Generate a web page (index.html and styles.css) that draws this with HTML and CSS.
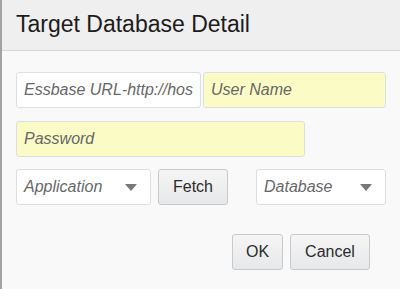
FILE: index.html
```html
<!DOCTYPE html>
<html>
<head>
<meta charset="utf-8">
<link rel="stylesheet" href="styles.css">
</head>
<body>
<div class="dialog">
  <div class="header">Target Database Detail</div>
  <div class="content">
    <div class="row first">
      <input class="field url" placeholder="Essbase URL-http://host:port/essbase">
      <input class="field user autofill" placeholder="User Name">
    </div>
    <div class="row">
      <input class="field password autofill" type="password" placeholder="Password">
    </div>
    <div class="row">
      <div class="select app">
        <span class="ph">Application</span>
        <svg class="arrow" width="12" height="7" viewBox="0 0 12 7"><path d="M0 0H12L6 7Z" fill="#777"/></svg>
      </div>
      <button class="btn fetch">Fetch</button>
      <div class="select db">
        <span class="ph">Database</span>
        <svg class="arrow" width="12" height="7" viewBox="0 0 12 7"><path d="M0 0H12L6 7Z" fill="#777"/></svg>
      </div>
    </div>
    <div class="actions">
      <button class="btn ok">OK</button>
      <button class="btn cancel">Cancel</button>
    </div>
  </div>
</div>
</body>
</html>
```
FILE: styles.css
```css
html, body {
  margin: 0;
  padding: 0;
  height: 100%;
}
body {
  background: #f9f9f9;
  font-family: "Liberation Sans", Arial, sans-serif;
  overflow: hidden;
}
.dialog {
  height: 289px;
  border-left: 2px solid #a3a3a3;
  box-sizing: border-box;
  background: #f9f9f9;
}
.header {
  background: #efefef;
  border-bottom: 1px solid #d3d7db;
  height: 28px;
  padding: 10px 0 12px 14px;
  font-size: 23px;
  line-height: 28px;
  color: #1c1c1c;
}
.content {
  padding: 21px 0 0 14px;
  display: flex;
  flex-direction: column;
  gap: 12px;
}
.row {
  display: flex;
  align-items: center;
}
.row.first {
  margin-bottom: 1px;
}
.field {
  box-sizing: border-box;
  height: 36px;
  border: 1px solid #dcdfe2;
  border-radius: 3px;
  background: #fff;
  padding: 0 7px;
  font-family: "Liberation Sans", Arial, sans-serif;
  font-size: 16px;
  font-style: italic;
  color: #333;
  outline: none;
  margin: 0;
}
.field::placeholder {
  color: #676767;
  font-style: italic;
}
.autofill {
  background: #fbfbc6;
}
.url { width: 185px; margin-right: 2px; }
.user { width: 183px; }
.password { width: 289px; }
.select {
  box-sizing: border-box;
  height: 36px;
  border: 1px solid #dcdfe2;
  border-radius: 3px;
  background: #fff;
  display: flex;
  align-items: center;
  justify-content: space-between;
  padding: 0 13px 0 7px;
  font-size: 16px;
  font-style: italic;
  color: #676767;
}
.arrow { display: block; margin-top: 1px; }
.app { width: 135px; margin-right: 7px; }
.db { width: 130px; margin-left: 28px; }
.btn {
  box-sizing: border-box;
  height: 36px;
  border: 1px solid #c6cacd;
  border-radius: 3px;
  background: linear-gradient(#f5f5f5, #e7e8ea);
  font-family: "Liberation Sans", Arial, sans-serif;
  font-size: 16px;
  color: #2b2b2b;
  padding: 0;
  margin: 0;
}
.fetch { width: 70px; }
.actions {
  display: flex;
  gap: 7px;
  margin-top: 17px;
  padding-left: 216px;
}
.ok { width: 51px; }
.cancel { width: 80px; }
```
